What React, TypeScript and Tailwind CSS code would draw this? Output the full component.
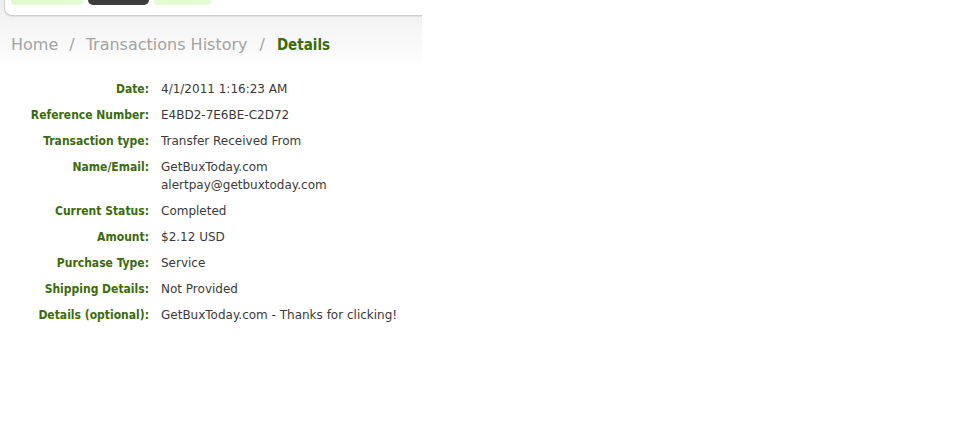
import React from "react";

type Row = { label: string; value: string[] };

const rows: Row[] = [
  { label: "Date:", value: ["4/1/2011 1:16:23 AM"] },
  { label: "Reference Number:", value: ["E4BD2-7E6BE-C2D72"] },
  { label: "Transaction type:", value: ["Transfer Received From"] },
  { label: "Name/Email:", value: ["GetBuxToday.com", "alertpay@getbuxtoday.com"] },
  { label: "Current Status:", value: ["Completed"] },
  { label: "Amount:", value: ["$2.12 USD"] },
  { label: "Purchase Type:", value: ["Service"] },
  { label: "Shipping Details:", value: ["Not Provided"] },
  { label: "Details (optional):", value: ["GetBuxToday.com - Thanks for clicking!"] },
];

const App: React.FC = () => {
  return (
    <div className="w-[962px] h-[445px] bg-white font-['DejaVu_Sans',sans-serif]">
      <div className="w-[422px] bg-gradient-to-b from-[#efefef] to-white to-[70px]">
        <div className="ml-[4px] h-[16px] bg-white rounded-bl-[8px] border-b border-l border-[#cfcfcf] shadow-[0_1px_1px_rgba(0,0,0,0.08)] flex gap-[5px] pl-[6px]">
          <div className="w-[72px] h-[5px] bg-[#e4fbd1] rounded-b-[4px]" />
          <div className="w-[61px] h-[5px] bg-[#3d3d3d] rounded-b-[5px]" />
          <div className="w-[57px] h-[5px] bg-[#e4fbd1] rounded-b-[4px]" />
        </div>
        <div className="pl-[11px] pt-[18px] pb-[15px] text-[16px] leading-[22px] text-[#a3a3a3]">
          <span>Home</span>
          <span className="mx-[11px]">/</span>
          <span>Transactions History</span>
          <span className="mx-[12px]">/</span>
          <span className="text-[#3b6b0c] font-bold font-['DejaVu_Sans_Condensed',sans-serif] text-[15px]">Details</span>
        </div>
      </div>
      <div className="flex flex-col pt-[5px]">
        {rows.map((r) => (
          <div key={r.label} className="flex py-[4px] text-[12px] leading-[18px]">
            <div className="w-[150px] pr-[1px] text-right font-bold text-[#3b6b0c] font-['DejaVu_Sans_Condensed',sans-serif]">
              {r.label}
            </div>
            <div className="pl-[11px] text-[#3a3a3a] flex flex-col">
              {r.value.map((v) => (
                <span key={v}>{v}</span>
              ))}
            </div>
          </div>
        ))}
      </div>
    </div>
  );
};

export default App;
